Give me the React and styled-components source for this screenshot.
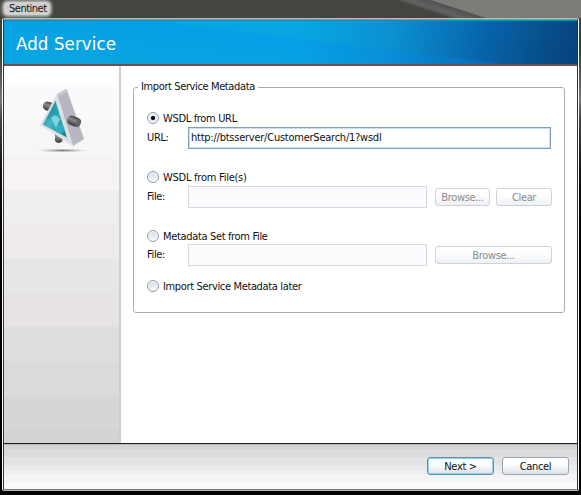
import React from "react";
import styled, { createGlobalStyle, css } from "styled-components";

const GlobalStyle = createGlobalStyle`
  * { box-sizing: border-box; }
  body { margin: 0; background: #000; overflow: hidden; }
`;

const Desktop = styled.div`
  width: 581px;
  height: 495px;
  overflow: hidden;
  display: flex;
  flex-direction: column;
  background: linear-gradient(180deg, #444540 0, #3a3a38 50px, #777 100px, #444 120px, #111 170px, #000 240px);
  color: #111;
  font: 11px/14px "DejaVu Sans Condensed", "DejaVu Sans", sans-serif;
  font-stretch: condensed;
`;

const TitleBar = styled.div`
  flex: 0 0 18px;
  padding: 2px 0 0 4px;
  background: linear-gradient(198deg, #7b7c78 0 46px, #515151 47px, #646362 54px, #535353 56px, #444540 58px);
`;

const WindowTitle = styled.span`
  display: block;
  width: 46px;
  height: 13px;
  padding-left: 5px;
  border-radius: 4px;
  background: #d0d0d0;
  box-shadow: 0 0 3px 2px #b4b4b4;
  white-space: nowrap;
  letter-spacing: -0.5px;
`;

const Dialog = styled.div`
  width: 577px;
  height: 473px;
  margin-left: 2px;
  border: 1px solid #fff;
  border-top-color: #bbbcb5;
  border-bottom-color: #b8b8b8;
  border-radius: 2px;
`;

const Frame = styled.div`
  height: 100%;
  border: 1px solid #3a3033;
  border-top-color: #8d9290;
  border-bottom-color: #777;
  display: flex;
  flex-direction: column;
`;

const Header = styled.header`
  flex: 0 0 46px;
  padding: 12px 0 0 12px;
  border-top: 1px solid #0a8cc2;
  border-bottom: 2px solid #605557;
  background:
    linear-gradient(187deg, transparent 45%, rgba(0, 140, 235, 0.28) 47%, transparent 85%),
    linear-gradient(100deg, #08a5e2 0, #08a5e2 52%, #0b91d2 67%, #0762a8 84%, #07508d 93%, #07427b 100%);
`;

const Heading = styled.h1`
  margin: 0;
  color: #fff;
  font: 18.5px/22px "DejaVu Sans Condensed", sans-serif;
  letter-spacing: 0.1px;
`;

const Content = styled.div`
  flex: 1;
  min-height: 0;
  display: flex;
`;

const Sidebar = styled.aside`
  width: 117px;
  padding: 22px 0 0 32px;
  border-right: 2px solid #ceced0;
  background: linear-gradient(180deg,
    #fff 0 21px, #fcf9fd 21px 55px, #f6f6f6 55px 90px, #f6f2f6 90px 124px,
    #eee 124px 158px, #eeeaee 158px 193px, #e6e6e6 193px 227px, #e7e2e6 227px 261px,
    #dedede 261px 296px, #dddade 296px 330px, #d6d6d6 330px 364px, #d4d2d5 364px);
`;

const Page = styled.main`
  flex: 1;
  padding: 14px 0 0 12px;
  background: #fff;
`;

const Group = styled.fieldset`
  width: 432px;
  height: 233px;
  margin: 0;
  padding: 18px 0 0 13px;
  border: 1px solid #a9abae;
  border-radius: 3px;
`;

const Legend = styled.legend`
  height: 14px;
  margin-left: -9px;
  padding: 0 3px;
  letter-spacing: -0.38px;
`;

const Option = styled.label`
  display: flex;
  align-items: center;
  gap: 4px;
  height: 14px;
  margin-top: ${(p) => p.$gap || 0}px;
  white-space: nowrap;
  letter-spacing: ${(p) => p.$track || 0}px;
`;

const Radio = styled.span`
  width: 12px;
  height: 12px;
  margin-bottom: 2px;
  border: 1px solid #8f9aa7;
  border-radius: 50%;
  box-shadow: inset 0 0 0 1px #fff;
  background: ${(p) => p.$on
    ? css`radial-gradient(circle, #111 0 1.6px, #dde3ec 2.5px, #e8edf4 5px)`
    : css`linear-gradient(#d6dde8, #f7f8fc)`};
`;

const Row = styled.div`
  display: flex;
  align-items: center;
  height: 22px;
  margin-top: ${(p) => p.$gap || 0}px;
`;

const RowLabel = styled.span`
  width: 41px;
  letter-spacing: -0.35px;
`;

const Field = styled.div`
  width: ${(p) => (p.$active ? 363 : 239)}px;
  height: 22px;
  padding: 3px 2px 0;
  border: 1px solid ${(p) => (p.$active ? "#7f9fc0" : "#d5d9e1")};
  background: ${(p) => (p.$active ? "#fff" : "#fdfafe")};
  box-shadow: ${(p) => (p.$active ? "inset 0 0 0 1px #c9dff5" : "none")};
  letter-spacing: -0.24px;
`;

const Button = styled.button`
  width: ${(p) => p.$w}px;
  height: 18px;
  margin: 0 0 0 ${(p) => p.$gap || 0}px;
  padding: 0;
  border: 1px solid #9aa5b2;
  border-radius: 3px;
  background: linear-gradient(#fff 35%, #f1f3f7 65%, #d8dee7);
  color: #111;
  font: inherit;
  line-height: 15px;
  letter-spacing: -0.35px;
  &:disabled {
    border-color: #cdd1d9;
    background: linear-gradient(#fff 40%, #edeff3);
    color: #8b8b8b;
  }
  ${(p) => p.$primary && css`
    border-color: #5a91a9;
    box-shadow: inset 0 0 0 1px #8ed5ec;
  `}
`;

const Footer = styled.footer`
  flex: 0 0 46px;
  display: flex;
  justify-content: flex-end;
  padding: 13px 8px 0 0;
  border-top: 1px solid #222;
  background: linear-gradient(180deg, #b8b8b8 0 1px, #d5d4d5 1px 5px, #dcdcdc 5px 13px, #e3e2e4 13px 21px, #ece9ec 21px 26px, #eee 26px 30px, #f4f4f6 30px 38px, #fcfafd 38px);
`;

const Backdrop = styled.div`
  flex: 1;
  background: #000;
`;

function Logo() {
  return (
    <svg width="60" height="68" viewBox="36 88 60 68">
      <defs>
        <radialGradient id="shadow"><stop offset="0" stopColor="#777" /><stop offset="1" stopColor="#aaa" stopOpacity="0" /></radialGradient>
        <linearGradient id="post" x2="0" y2="1"><stop stopColor="#444" /><stop offset=".4" stopColor="#8b8b8b" /><stop offset="1" stopColor="#393939" /></linearGradient>
        <linearGradient id="glass" x2="1" y2="1"><stop stopColor="#087080" /><stop offset=".5" stopColor="#3bb2c4" /><stop offset="1" stopColor="#067c8e" /></linearGradient>
      </defs>
      <ellipse cx="62.5" cy="150.5" rx="25" ry="2" fill="url(#shadow)" />
      <path d="M55 132v9q3.5 4 7.5 0v-9z" fill="url(#post)" />
      <rect x="43" y="102" width="13" height="9" rx="4.2" fill="url(#post)" transform="rotate(18 49 106)" />
      <path d="M57 94l9.5-5.200L84 139l-11 7z" fill="#b6b7c0" />
      <path d="M57 94l9.500-5.200 1 3-9.500 5z" fill="#c9c9cf" />
      <path d="M57 94L40 125l33 21z" fill="#dedfe3" />
      <path d="M55.500 101L43 124.500l24 13z" fill="url(#glass)" />
      <circle cx="48" cy="123" r="4" fill="#4ab9c8" opacity=".6" />
      <circle cx="60" cy="129" r="4.500" fill="#40b8ca" opacity=".65" />
      <circle cx="55" cy="112" r="3.500" fill="#269bad" opacity=".8" />
      <path d="M51 118l4-3 5 4-4 9z" fill="#9be0e4" opacity=".75" />
      <rect x="67" y="116.500" width="14" height="9.500" rx="4.500" fill="url(#post)" transform="rotate(22 74 121)" />
      <ellipse cx="78.300" cy="123" rx="2.500" ry="4.300" fill="#646464" transform="rotate(20 78.3 123)" />
    </svg>
  );
}

export default function App() {
  return (
    <>
      <GlobalStyle />
      <Desktop>
        <TitleBar><WindowTitle>Sentinet</WindowTitle></TitleBar>
        <Dialog>
          <Frame>
            <Header><Heading>Add Service</Heading></Header>
            <Content>
              <Sidebar><Logo /></Sidebar>
              <Page>
                <Group>
                  <Legend>Import Service Metadata</Legend>
                  <Option $track={-0.33}><Radio $on />WSDL from URL</Option>
                  <Row $gap={1}><RowLabel>URL:</RowLabel><Field $active>http://btsserver/CustomerSearch/1?wsdl</Field></Row>
                  <Option $gap={22} $track={-0.25}><Radio />WSDL from File(s)</Option>
                  <Row $gap={1}><RowLabel>File:</RowLabel><Field /><Button disabled $w={55} $gap={8}>Browse...</Button><Button disabled $w={56} $gap={6}>Clear</Button></Row>
                  <Option $gap={22} $track={-0.34}><Radio />Metadata Set from File</Option>
                  <Row><RowLabel>File:</RowLabel><Field /><Button disabled $w={117} $gap={8}>Browse...</Button></Row>
                  <Option $gap={14} $track={-0.35}><Radio />Import Service Metadata later</Option>
                </Group>
              </Page>
            </Content>
            <Footer><Button $w={67} $primary>Next &gt;</Button><Button $w={67} $gap={8}>Cancel</Button></Footer>
          </Frame>
        </Dialog>
        <Backdrop />
      </Desktop>
    </>
  );
}
